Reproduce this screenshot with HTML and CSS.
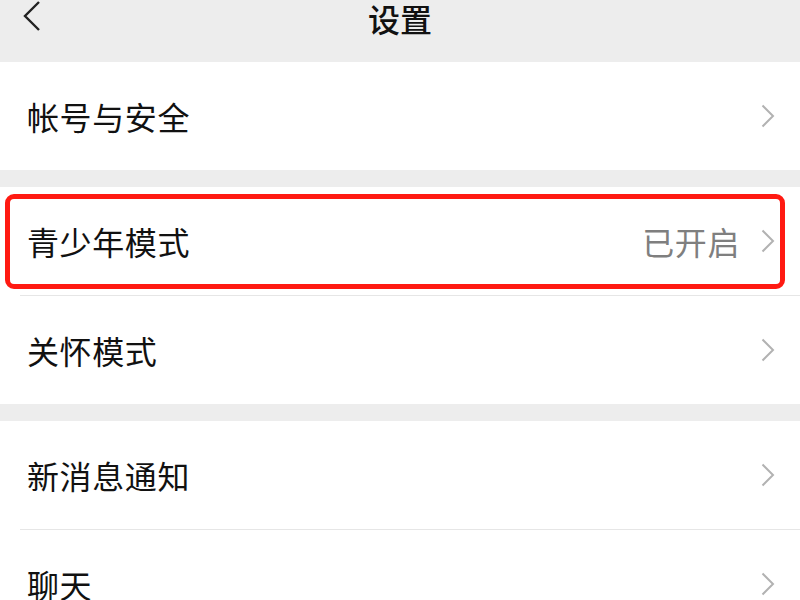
FILE: index.html
```html
<!DOCTYPE html>
<html lang="zh-CN">
<head>
  <meta charset="UTF-8" />
  <meta name="viewport" content="width=device-width, initial-scale=1.0"/>
  <title>设置</title>
  <link rel="stylesheet" href="styles.css">
</head>
<body>
  <header class="topbar">
    <span class="back">
      <svg width="20" height="30" viewBox="0 0 20 30"><path d="M17 1 L3 15 L17 29" fill="none" stroke="#222" stroke-width="2.4"/></svg>
    </span>
    <h1>设置</h1>
  </header>

  <div class="group">
    <div class="row">
      <span class="label">帐号与安全</span>
      <span class="arrow"><svg width="14" height="24" viewBox="0 0 14 24"><path d="M1.5 1.5 L12 12 L1.5 22.5" fill="none" stroke="#b2b2b2" stroke-width="2"/></svg></span>
    </div>
  </div>

  <div class="group">
    <div class="row highlight">
      <span class="label">青少年模式</span>
      <span class="value">已开启</span>
      <span class="arrow"><svg width="14" height="24" viewBox="0 0 14 24"><path d="M1.5 1.5 L12 12 L1.5 22.5" fill="none" stroke="#b2b2b2" stroke-width="2"/></svg></span>
      <span class="mark"></span>
    </div>
    <div class="row">
      <span class="label">关怀模式</span>
      <span class="arrow"><svg width="14" height="24" viewBox="0 0 14 24"><path d="M1.5 1.5 L12 12 L1.5 22.5" fill="none" stroke="#b2b2b2" stroke-width="2"/></svg></span>
    </div>
  </div>

  <div class="group">
    <div class="row">
      <span class="label">新消息通知</span>
      <span class="arrow"><svg width="14" height="24" viewBox="0 0 14 24"><path d="M1.5 1.5 L12 12 L1.5 22.5" fill="none" stroke="#b2b2b2" stroke-width="2"/></svg></span>
    </div>
    <div class="row">
      <span class="label">聊天</span>
      <span class="arrow"><svg width="14" height="24" viewBox="0 0 14 24"><path d="M1.5 1.5 L12 12 L1.5 22.5" fill="none" stroke="#b2b2b2" stroke-width="2"/></svg></span>
    </div>
  </div>
</body>
</html>
```

FILE: styles.css
```css
body {
  margin: 0;
  font-family: "Noto Sans CJK SC", "Noto Sans", sans-serif;
  background-color: #ededed;
  color: #111;
}

.topbar {
  height: 62px;
  display: flex;
  justify-content: center;
  position: relative;
}

.topbar h1 {
  margin: 0;
  font-size: 32px;
  font-weight: 500;
  line-height: 36px;
}

.back {
  position: absolute;
  left: 22px;
  top: 1px;
}

.group {
  background-color: white;
  margin-bottom: 17px;
}

.row {
  height: 108px;
  display: flex;
  align-items: center;
  padding: 0 25px 0 27px;
  position: relative;
}

.row + .row {
  border-top: 1px solid #e6e6e6;
  margin-left: 20px;
  padding-left: 7px;
}

.label {
  flex: 1;
  font-size: 32px;
  letter-spacing: 0.6px;
}

.value {
  font-size: 32px;
  letter-spacing: 0.6px;
  color: #7f7f7f;
  margin-right: 21px;
}

.arrow {
  display: flex;
}

.mark {
  position: absolute;
  left: 5px;
  right: 15px;
  top: 7px;
  bottom: 6px;
  border: 5px solid #ff1a12;
  border-radius: 9px;
}
```
